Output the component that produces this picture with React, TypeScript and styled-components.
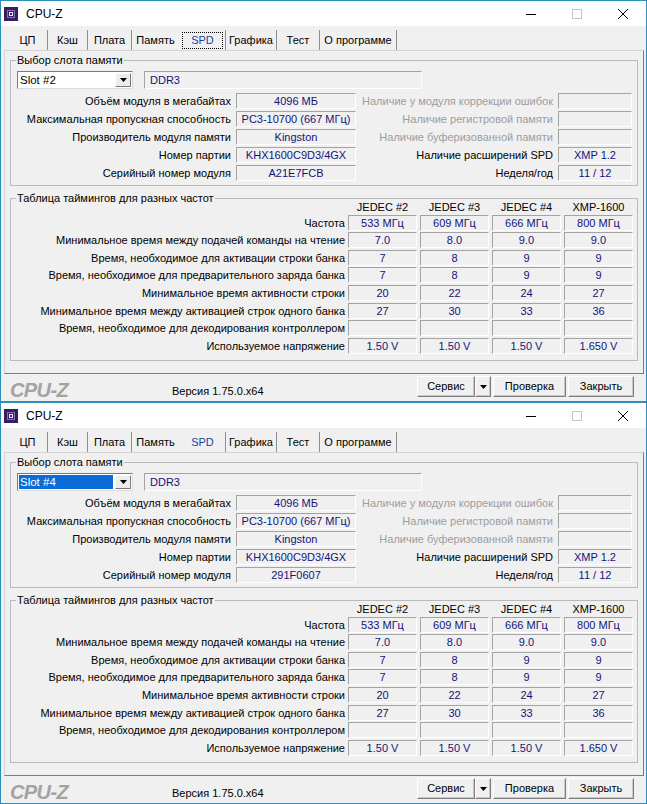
import React from 'react';
import styled, { createGlobalStyle } from 'styled-components';

const FONT = `"Liberation Sans", Arial, sans-serif`;

const GlobalStyle = createGlobalStyle`
  html, body { margin: 0; padding: 0; background: #ffffff; }
  body { font-family: ${FONT}; font-size: 11px; color: #000; }
  * { box-sizing: border-box; }
`;

const Page = styled.div`
  display: flex;
  flex-direction: column;
  width: 647px;
`;

const Window = styled.section`
  width: 647px;
  height: 402px;
  border: 1px solid #2d8fbb;
  background: #f0f0f0;
  display: flex;
  flex-direction: column;
`;

const TitleBar = styled.header`
  height: 25px;
  flex: none;
  background: #ffffff;
  display: flex;
  align-items: center;
  padding-left: 3px;
`;

const TitleText = styled.span`
  margin-left: 8px;
  font-size: 12px;
  flex: 1;
`;

const CaptionButton = styled.div`
  width: 46px;
  height: 25px;
  display: flex;
  align-items: center;
  justify-content: center;
`;

const Body = styled.div`
  flex: 1;
  display: flex;
  flex-direction: column;
  padding: 4px 2px 0 3px;
`;

const TabStrip = styled.nav`
  display: flex;
  height: 20px;
  flex: none;
  padding-left: 4px;
`;

const Tab = styled.div<{ $w: number; $active?: boolean; $hideSep?: boolean }>`
  width: ${(p) => p.$w}px;
  height: 20px;
  display: flex;
  align-items: center;
  justify-content: center;
  white-space: nowrap;
  border-right: 1px solid ${(p) => (p.$hideSep ? 'transparent' : '#8e8e8e')};
  color: ${(p) => (p.$active ? '#1c3f9e' : '#000')};
`;

const FocusRect = styled.span<{ $on: boolean }>`
  display: inline-block;
  padding: 1px 8px;
  line-height: 13px;
  border: 1px dotted ${(p) => (p.$on ? '#000' : 'transparent')};
`;

const Panel = styled.div`
  height: 324px;
  flex: none;
  border: 1px solid;
  border-color: #d4d4d4 #7c7c7c #7c7c7c #d4d4d4;
  padding: 3px 5px 0 5px;
  display: flex;
  flex-direction: column;
`;

const Group = styled.fieldset<{ $mt?: number; $pb: number }>`
  margin: ${(p) => p.$mt ?? 0}px 0 0 0;
  padding: 5px 4px ${(p) => p.$pb}px 6px;
  border: 1px solid #b9b9b9;
  min-width: 0;
`;

const Legend = styled.legend`
  padding: 0 1px;
  margin-left: -1px;
  line-height: 12px;
  font-size: 11px;
`;

const ComboRow = styled.div`
  display: flex;
  gap: 11px;
  height: 18px;
`;

const Combo = styled.div`
  width: 116px;
  height: 18px;
  border: 1px solid;
  border-color: #7a7a7a #dcdcdc #dcdcdc #7a7a7a;
  background: #ffffff;
  display: flex;
  padding: 1px;
`;

const ComboText = styled.div<{ $focused: boolean }>`
  flex: 1;
  padding-left: 1px;
  line-height: 14px;
  font-size: 11.5px;
  background: ${(p) => (p.$focused ? '#0a6cd6' : 'transparent')};
  color: ${(p) => (p.$focused ? '#ffffff' : '#000')};
  margin-right: 2px;
`;

const ComboButton = styled.div`
  width: 16px;
  height: 14px;
  border: 1px solid;
  border-color: #ffffff #7a7a7a #7a7a7a #ffffff;
  background: #ececec;
  display: flex;
  align-items: center;
  justify-content: center;
`;

const ValueBox = styled.div<{ $left?: boolean }>`
  height: 16px;
  background: #f0f0f0;
  border: 1px solid;
  border-color: #a3a3a3 #ffffff #ffffff #a3a3a3;
  color: #141478;
  line-height: 14px;
  text-align: ${(p) => (p.$left ? 'left' : 'center')};
  padding: 0 3px;
  white-space: nowrap;
  overflow: hidden;
`;

const TypeBox = styled(ValueBox)`
  width: 278px;
  height: 18px;
  line-height: 16px;
  padding-left: 5px;
`;

const Label = styled.div<{ $disabled?: boolean }>`
  text-align: right;
  line-height: 16px;
  white-space: nowrap;
  color: ${(p) => (p.$disabled ? '#9d9d9d' : '#000')};
`;

const InfoGrid = styled.div`
  margin-top: 4px;
  display: grid;
  grid-template-columns: 214px 120px 192px 74px;
  grid-auto-rows: 16px;
  column-gap: 5px;
  row-gap: 2px;
`;

const TimingGrid = styled.div`
  margin-top: -8px;
  display: grid;
  grid-template-columns: 1fr repeat(4, 69px);
  grid-template-rows: 12px;
  grid-auto-rows: 16px;
  column-gap: 3px;
  row-gap: 1.6px;
`;

const ColHead = styled.div`
  text-align: center;
  line-height: 12px;
  white-space: nowrap;
`;

const Footer = styled.footer`
  flex: 1;
  display: flex;
  align-items: flex-start;
  padding: 0 10px 0 6px;
`;

const Logo = styled.div`
  width: 162px;
  margin-top: 6px;
  font-size: 20px;
  line-height: 20px;
  font-weight: bold;
  font-style: italic;
  letter-spacing: -0.6px;
  color: #a3a3a3;
`;

const Version = styled.div`
  flex: 1;
  margin-top: 11px;
  line-height: 13px;
`;

const Buttons = styled.div`
  display: flex;
  gap: 2px;
  margin-top: 2px;
`;

const Button = styled.div<{ $w: number }>`
  width: ${(p) => p.$w}px;
  height: 21px;
  border: 1px solid;
  border-color: #ffffff #7e7e7e #7e7e7e #ffffff;
  box-shadow: inset -1px -1px 0 #c8c8c8;
  background: #f0f0f0;
  display: flex;
  align-items: center;
  justify-content: center;
  line-height: 13px;
`;

const Split = styled.div`
  display: flex;
`;

const DownArrow = () => (
  <svg width="7" height="4" viewBox="0 0 7 4">
    <path d="M0 0H7L3.5 4Z" fill="#000" />
  </svg>
);

const AppIcon = () => (
  <svg width="14" height="14" viewBox="0 0 14 14">
    <rect width="14" height="14" fill="#3a1b66" />
    <rect x="3.5" y="3.5" width="7" height="7" fill="none" stroke="#d9cdf2" strokeDasharray="1 1" />
    <rect x="5.5" y="5.5" width="3" height="3" fill="none" stroke="#efe8ff" />
  </svg>
);

const TABS = [
  { label: 'ЦП', width: 40 },
  { label: 'Кэш', width: 40 },
  { label: 'Плата', width: 44 },
  { label: 'Память', width: 48 },
  { label: 'SPD', width: 46 },
  { label: 'Графика', width: 51 },
  { label: 'Тест', width: 43 },
  { label: 'О программе', width: 77 },
];
const ACTIVE = 4;

const HEADS = ['JEDEC #2', 'JEDEC #3', 'JEDEC #4', 'XMP-1600'];
const TIMINGS: [string, string[]][] = [
  ['Частота', ['533 МГц', '609 МГц', '666 МГц', '800 МГц']],
  ['Минимальное время между подачей команды на чтение', ['7.0', '8.0', '9.0', '9.0']],
  ['Время, необходимое для активации строки банка', ['7', '8', '9', '9']],
  ['Время, необходимое для предварительного заряда банка', ['7', '8', '9', '9']],
  ['Минимальное время активности строки', ['20', '22', '24', '27']],
  ['Минимальное время между активацией строк одного банка', ['27', '30', '33', '36']],
  ['Время, необходимое для декодирования контроллером', ['', '', '', '']],
  ['Используемое напряжение', ['1.50 V', '1.50 V', '1.50 V', '1.650 V']],
];

type WinProps = { slot: string; serial: string; tabFocus: boolean; comboFocus: boolean };

const CpuzWindow: React.FC<WinProps> = ({ slot, serial, tabFocus, comboFocus }) => {
  const left: [string, string][] = [
    ['Объём модуля в мегабайтах', '4096 МБ'],
    ['Максимальная пропускная способность', 'PC3-10700 (667 МГц)'],
    ['Производитель модуля памяти', 'Kingston'],
    ['Номер партии', 'KHX1600C9D3/4GX'],
    ['Серийный номер модуля', serial],
  ];
  const right: [string, string, boolean][] = [
    ['Наличие у модуля коррекции ошибок', '', true],
    ['Наличие регистровой памяти', '', true],
    ['Наличие буферизованной памяти', '', true],
    ['Наличие расширений SPD', 'XMP 1.2', false],
    ['Неделя/год', '11 / 12', false],
  ];
  return (
    <Window>
      <TitleBar>
        <AppIcon />
        <TitleText>CPU-Z</TitleText>
        <CaptionButton>
          <svg width="10" height="10" viewBox="0 0 10 10">
            <path d="M0 5.5H10" stroke="#000" strokeWidth="1" />
          </svg>
        </CaptionButton>
        <CaptionButton>
          <svg width="10" height="10" viewBox="0 0 10 10">
            <rect x="0.5" y="0.5" width="9" height="9" fill="none" stroke="#c4c4c4" />
          </svg>
        </CaptionButton>
        <CaptionButton>
          <svg width="10" height="10" viewBox="0 0 10 10">
            <path d="M0 0L10 10M10 0L0 10" stroke="#000" strokeWidth="1" />
          </svg>
        </CaptionButton>
      </TitleBar>
      <Body>
        <TabStrip>
          {TABS.map((t, i) => (
            <Tab key={t.label} $w={t.width} $active={i === ACTIVE} $hideSep={i === ACTIVE - 1}>
              {i === ACTIVE ? <FocusRect $on={tabFocus}>{t.label}</FocusRect> : t.label}
            </Tab>
          ))}
        </TabStrip>
        <Panel>
          <Group $pb={4}>
            <Legend>Выбор слота памяти</Legend>
            <ComboRow>
              <Combo>
                <ComboText $focused={comboFocus}>{slot}</ComboText>
                <ComboButton>
                  <DownArrow />
                </ComboButton>
              </Combo>
              <TypeBox $left>DDR3</TypeBox>
            </ComboRow>
            <InfoGrid>
              {left.map(([l, v], i) => (
                <React.Fragment key={l}>
                  <Label>{l}</Label>
                  <ValueBox>{v}</ValueBox>
                  <Label $disabled={right[i][2]}>{right[i][0]}</Label>
                  <ValueBox>{right[i][1]}</ValueBox>
                </React.Fragment>
              ))}
            </InfoGrid>
          </Group>
          <Group $mt={6} $pb={6}>
            <Legend>Таблица таймингов для разных частот</Legend>
            <TimingGrid>
              <div />
              {HEADS.map((h) => (
                <ColHead key={h}>{h}</ColHead>
              ))}
              {TIMINGS.map(([l, vals]) => (
                <React.Fragment key={l}>
                  <Label>{l}</Label>
                  {vals.map((v, j) => (
                    <ValueBox key={j}>{v}</ValueBox>
                  ))}
                </React.Fragment>
              ))}
            </TimingGrid>
          </Group>
        </Panel>
        <Footer>
          <Logo>CPU-Z</Logo>
          <Version>Версия 1.75.0.x64</Version>
          <Buttons>
            <Split>
              <Button $w={58}>Сервис</Button>
              <Button $w={16}>
                <DownArrow />
              </Button>
            </Split>
            <Button $w={73}>Проверка</Button>
            <Button $w={66}>Закрыть</Button>
          </Buttons>
        </Footer>
      </Body>
    </Window>
  );
};

export default function App() {
  return (
    <Page>
      <GlobalStyle />
      <CpuzWindow slot="Slot #2" serial="A21E7FCB" tabFocus comboFocus={false} />
      <CpuzWindow slot="Slot #4" serial="291F0607" tabFocus={false} comboFocus />
    </Page>
  );
}
